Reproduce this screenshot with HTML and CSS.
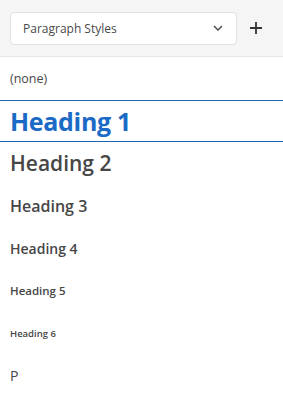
FILE: index.html
```html
<!DOCTYPE html>
<html lang="en">
<head>
    <meta charset="UTF-8">
    <meta name="viewport" content="width=device-width, initial-scale=1.0">
    <title>Paragraph Styles</title>
    <link rel="stylesheet" href="styles.css">
</head>
<body>
    <header class="toolbar">
        <div class="style-select">
            <span>Paragraph Styles</span>
            <svg class="chevron" width="10" height="6" viewBox="0 0 10 6"><path d="M1 1l4 4 4-4" fill="none" stroke="#555" stroke-width="1.6"/></svg>
        </div>
        <button class="add-btn" title="Add style">
            <svg width="14" height="14" viewBox="0 0 14 14"><path d="M7 1v12M1 7h12" stroke="#333" stroke-width="1.8"/></svg>
        </button>
    </header>
    <ul class="style-list">
        <li class="style-item none">(none)</li>
        <li class="style-item h1 selected">Heading 1</li>
        <li class="style-item h2">Heading 2</li>
        <li class="style-item h3">Heading 3</li>
        <li class="style-item h4">Heading 4</li>
        <li class="style-item h5">Heading 5</li>
        <li class="style-item h6">Heading 6</li>
        <li class="style-item p">P</li>
    </ul>
</body>
</html>
```

FILE: styles.css
```css
body {
    margin: 0;
    font-family: "Open Sans", Arial, sans-serif;
    background-color: #fff;
    color: #444;
}
.toolbar {
    display: flex;
    align-items: center;
    gap: 6px;
    height: 56px;
    padding: 0 14px 0 10px;
    background-color: #f5f5f5;
    border-bottom: 1px solid #e6e6e6;
}
.style-select {
    flex: 1;
    height: 31px;
    display: flex;
    align-items: center;
    justify-content: space-between;
    padding: 0 13px 0 12px;
    background-color: #fff;
    border: 1px solid #e1e1e1;
    border-radius: 4px;
    font-size: 12px;
    color: #4a4a4a;
}
.add-btn {
    width: 26px;
    height: 26px;
    padding: 0;
    display: flex;
    align-items: center;
    justify-content: center;
    background: none;
    border: none;
    cursor: pointer;
}
.style-list {
    list-style: none;
    margin: 0;
    padding: 0;
}
.style-item {
    height: 42.5px;
    display: flex;
    align-items: center;
    padding: 0 10px;
    font-weight: 600;
    color: #464646;
}
.selected {
    height: 40.5px;
    border-top: 1px solid #1a63b5;
    border-bottom: 1px solid #1a63b5;
    color: #1a6ac6;
    font-weight: 700;
}
.none { font-size: 12.5px; font-weight: 400; }
.h1 { font-size: 25px; letter-spacing: -0.3px; }
.h2 { font-size: 21px; }
.h3 { font-size: 16px; }
.h4 { font-size: 14px; }
.h5 { font-size: 11.5px; }
.h6 { font-size: 9.5px; }
.p { font-size: 14px; font-weight: 400; }
```
